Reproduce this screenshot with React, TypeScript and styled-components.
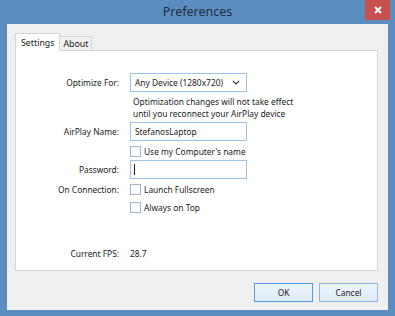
import styled, { createGlobalStyle } from "styled-components";

const Global = createGlobalStyle`
  html, body {
    margin: 0;
    padding: 0;
    background: #5b8dc1;
  }
  * {
    box-sizing: border-box;
  }
`;

//=============================== Window frame =========================================
const Window = styled.div`
  width: 395px;
  height: 316px;
  display: flex;
  flex-direction: column;
  background: #5b8dc1;
  padding: 0 7px 6px 7px;
  font-family: "Noto Sans", "Open Sans", sans-serif;
  font-size: 8.4px;
  color: #1b1b1b;
`;

const TitleBar = styled.div`
  position: relative;
  height: 24px;
  display: flex;
  align-items: center;
  justify-content: center;
  font-size: 12.5px;
  color: #1f2d3d;
  padding-bottom: 1px;
`;

const CloseButton = styled.div`
  position: absolute;
  top: 0;
  right: -2px;
  width: 25px;
  height: 20px;
  background: #c85050;
  display: flex;
  align-items: center;
  justify-content: center;
`;

const Client = styled.div`
  flex: 1;
  display: flex;
  flex-direction: column;
  background: #f0f0f0;
  padding: 9px 10px 0 8px;
`;

//=============================== Tabs =========================================
const TabRow = styled.div`
  display: flex;
  align-items: flex-end;
  height: 18px;
  position: relative;
  z-index: 1;
`;

const Tab = styled.div<{ $active?: boolean }>`
  height: ${(p) => (p.$active ? "18px" : "15px")};
  padding: 0 ${(p) => (p.$active ? "5px" : "3px")};
  display: flex;
  align-items: center;
  font-size: 8.8px;
  background: ${(p) => (p.$active ? "#ffffff" : "#f0f0f0")};
  border: 1px solid #d6d6d6;
  border-bottom: ${(p) => (p.$active ? "none" : "1px solid #d6d6d6")};
  margin-left: ${(p) => (p.$active ? "0" : "-1px")};
`;

const Panel = styled.div`
  height: 221px;
  margin-top: -1px;
  background: #ffffff;
  border: 1px solid #d6d6d6;
  display: flex;
  flex-direction: column;
  padding-top: 22px;
`;

//=============================== Form =========================================
const Row = styled.div<{ $h: number; $mt: number }>`
  display: flex;
  align-items: center;
  height: ${(p) => p.$h}px;
  margin-top: ${(p) => p.$mt}px;
`;

const Label = styled.div`
  width: 104px;
  text-align: right;
  padding-right: 1px;
  flex-shrink: 0;
`;

const Field = styled.div`
  margin-left: 10px;
  display: flex;
  align-items: center;
`;

const TextBox = styled.div`
  width: 117px;
  height: 19px;
  border: 1px solid #9cc3ea;
  background: #ffffff;
  display: flex;
  align-items: center;
  padding-left: 4px;
  position: relative;
`;

const SelectBox = styled(TextBox)`
  justify-content: space-between;
  padding-right: 6px;
`;

const Caret = styled.span`
  width: 1px;
  height: 11px;
  background: #222;
  margin-left: -1px;
`;

const Note = styled.div`
  margin-left: 117px;
  margin-top: 4px;
  line-height: 12px;
`;

const Check = styled.span`
  width: 11px;
  height: 11px;
  border: 1px solid #9fb4cc;
  background: #ffffff;
  margin-right: 3px;
`;

//=============================== Buttons =========================================
const ButtonRow = styled.div`
  display: flex;
  justify-content: flex-end;
  gap: 6px;
  margin-top: 12px;
`;

const Button = styled.div<{ $default?: boolean }>`
  width: 59px;
  height: 19px;
  display: flex;
  align-items: center;
  justify-content: center;
  background: linear-gradient(#eef5fc, #dfebf7);
  border: 1px solid ${(p) => (p.$default ? "#4f9de8" : "#8fb7df")};
`;

function Chevron() {
  return (
    <svg width="8" height="5" viewBox="0 0 8 5">
      <path d="M0.8 0.8 L4 4 L7.2 0.8" fill="none" stroke="#333" strokeWidth="1.1" />
    </svg>
  );
}

function CloseX() {
  return (
    <svg width="8" height="8" viewBox="0 0 8 8">
      <path d="M1 1 L7 7 M7 1 L1 7" stroke="#fff" strokeWidth="1.8" />
    </svg>
  );
}

export default function App() {
  return (
    <>
      <Global />
      <Window>
        <TitleBar>
          Preferences
          <CloseButton>
            <CloseX />
          </CloseButton>
        </TitleBar>
        <Client>
          <TabRow>
            <Tab $active>Settings</Tab>
            <Tab>About</Tab>
          </TabRow>
          <Panel>
            <Row $h={19} $mt={0}>
              <Label>Optimize For:</Label>
              <Field>
                <SelectBox>
                  Any Device (1280x720)
                  <Chevron />
                </SelectBox>
              </Field>
            </Row>
            <Note>
              Optimization changes will not take effect
              <br />
              until you reconnect your AirPlay device
            </Note>
            <Row $h={19} $mt={2}>
              <Label>AirPlay Name:</Label>
              <Field>
                <TextBox>StefanosLaptop</TextBox>
              </Field>
            </Row>
            <Row $h={13} $mt={4}>
              <Label />
              <Field>
                <Check />
                Use my Computer's name
              </Field>
            </Row>
            <Row $h={19} $mt={2}>
              <Label>Password:</Label>
              <Field>
                <TextBox>
                  <Caret />
                </TextBox>
              </Field>
            </Row>
            <Row $h={13} $mt={4}>
              <Label>On Connection:</Label>
              <Field>
                <Check />
                Launch Fullscreen
              </Field>
            </Row>
            <Row $h={13} $mt={5}>
              <Label />
              <Field>
                <Check />
                Always on Top
              </Field>
            </Row>
            <Row $h={13} $mt={33}>
              <Label>Current FPS:</Label>
              <Field>28.7</Field>
            </Row>
          </Panel>
          <ButtonRow>
            <Button $default>OK</Button>
            <Button>Cancel</Button>
          </ButtonRow>
        </Client>
      </Window>
    </>
  );
}
